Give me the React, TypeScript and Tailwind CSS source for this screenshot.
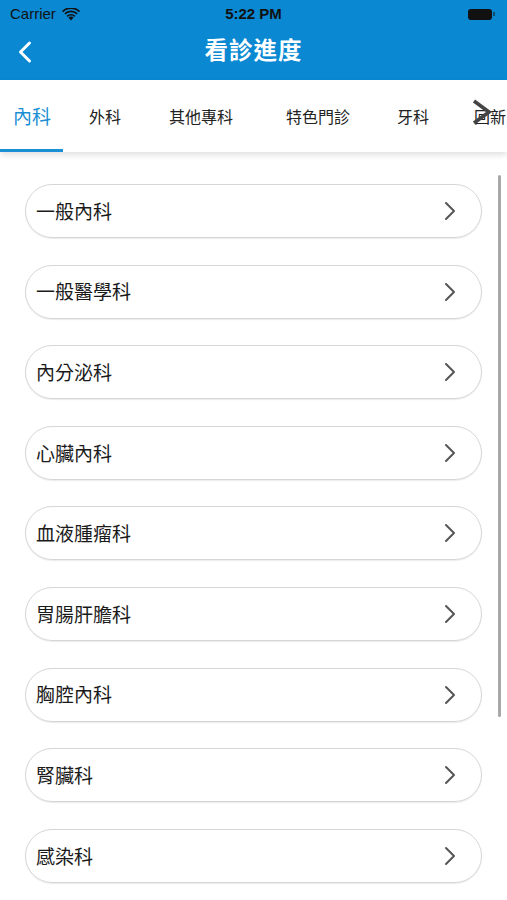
import { ChevronLeft } from "lucide-react";

const tabs = ["內科", "外科", "其他專科", "特色門診", "牙科", "回新"];
const tabCenters = [32, 105, 201, 318, 413, 490];

const depts = [
  "一般內科",
  "一般醫學科",
  "內分泌科",
  "心臟內科",
  "血液腫瘤科",
  "胃腸肝膽科",
  "胸腔內科",
  "腎臟科",
  "感染科",
];

const Wifi = () => (
  <svg width="18" height="13" viewBox="0 0 18 13" className="ml-[6px]">
    <path d="M9 12.5 L6.4 9.6 A3.8 3.8 0 0 1 11.6 9.6 Z" fill="#111" />
    <path d="M4.6 7.7 A6.3 6.3 0 0 1 13.4 7.7 L12.3 8.9 A4.7 4.7 0 0 0 5.7 8.9 Z" fill="#111" />
    <path d="M2.3 5.3 A9.6 9.6 0 0 1 15.7 5.3 L14.5 6.6 A7.9 7.9 0 0 0 3.5 6.6 Z" fill="#111" />
    <path d="M0 2.9 A12.8 12.8 0 0 1 18 2.9 L16.8 4.2 A11.1 11.1 0 0 0 1.2 4.2 Z" fill="#111" />
  </svg>
);

const App = () => {
  return (
    <div
      className="w-[507px] h-[900px] overflow-hidden bg-white relative"
      style={{ fontFamily: '"Noto Sans CJK TC", "Noto Sans", sans-serif' }}
    >
      {/* status + nav */}
      <div className="bg-[#0a88d2] h-[80px] flex flex-col">
        <div
          className="h-[28px] flex items-center justify-between px-[10px] text-[15px] text-[#111]"
          style={{ fontFamily: '"Liberation Sans", Arial, sans-serif' }}
        >
          <div className="flex items-center w-[120px]">
            <span>Carrier</span>
            <Wifi />
          </div>
          <span className="font-bold">5:22 PM</span>
          <div className="w-[120px] flex justify-end pr-[2px]">
            <div className="flex items-center">
              <div className="w-[24px] h-[11px] rounded-[3px] bg-[#111]" />
              <div className="w-[2px] h-[4px] bg-[#111] opacity-50 ml-[1px]" />
            </div>
          </div>
        </div>
        <div className="flex-1 relative flex items-center justify-center pb-[9px]">
          <ChevronLeft
            className="absolute left-[7px] top-[6px] text-white"
            size={36}
            strokeWidth={2}
          />
          <span className="text-white text-[23.5px] font-bold tracking-[1px]">看診進度</span>
        </div>
      </div>

      {/* tabs */}
      <div className="h-[72px] bg-white relative shadow-[0_3px_6px_rgba(0,0,0,0.12)] z-10">
        {tabs.map((t, i) => (
          <span
            key={t}
            className={`absolute -translate-x-1/2 whitespace-nowrap ${
              i === 0 ? "text-[19px] text-[#1a8fd4] top-[22px]" : "text-[16px] text-[#222] top-[24px]"
            }`}
            style={{ left: tabCenters[i] }}
          >
            {t}
          </span>
        ))}
        <div className="absolute left-0 bottom-0 w-[63px] h-[3px] bg-[#1a8fd4]" />
        <svg className="absolute left-[470px] top-[18px]" width="24" height="28" viewBox="0 0 24 28">
          <polyline points="4,3 19,14 4,25" fill="none" stroke="#444" strokeWidth="3.6" strokeLinejoin="miter" />
        </svg>
      </div>

      {/* list */}
      <div className="relative flex flex-col gap-[26.6px] pt-[32px] pl-[25px]">
        {depts.map((d) => (
          <div
            key={d}
            className="w-[457px] h-[54px] rounded-full border border-[#d6d6d6] shadow-[0_1px_1px_rgba(0,0,0,0.08)] flex items-center justify-between pl-[10px] pr-[25px] shrink-0"
          >
            <span className="text-[19px] text-[#1a1a1a]">{d}</span>
            <svg width="12" height="20" viewBox="0 0 12 20">
              <polyline points="2,2 10,10 2,18" fill="none" stroke="#555" strokeWidth="2" strokeLinecap="round" strokeLinejoin="round" />
            </svg>
          </div>
        ))}
        <div className="absolute left-[498px] top-[23px] w-[3px] h-[542px] rounded-full bg-[#a8a8a8]" />
      </div>
    </div>
  );
};

export default App;
